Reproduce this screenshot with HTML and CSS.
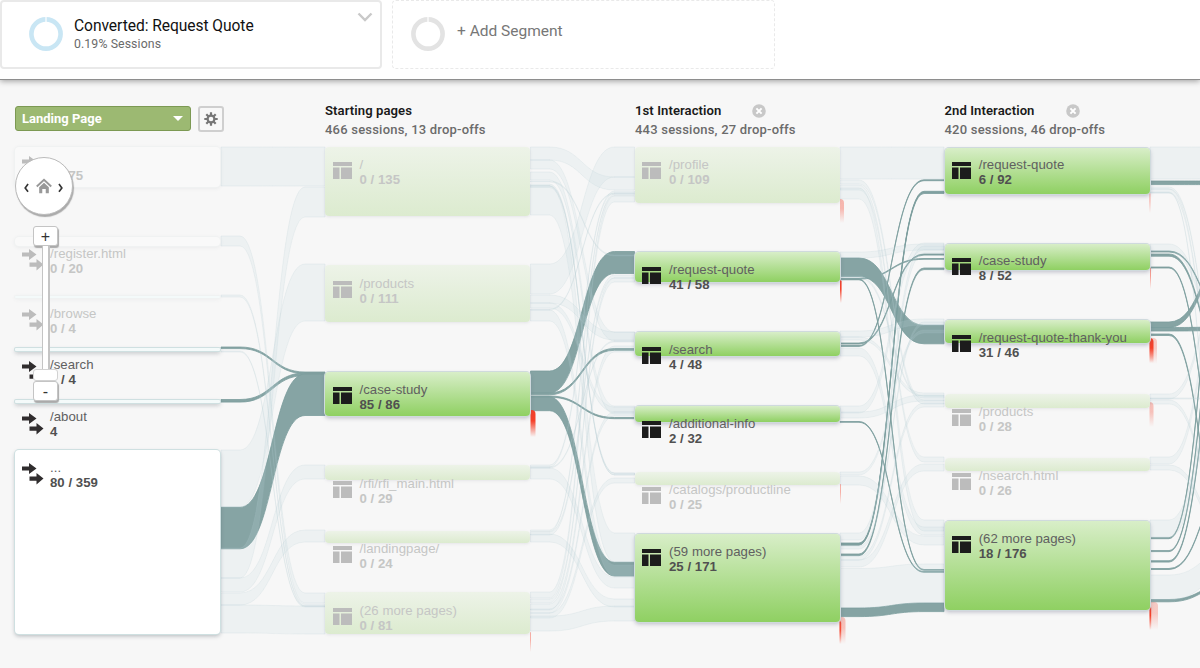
FILE: index.html
```html
<!DOCTYPE html>
<html lang="en">
<head>
<meta charset="utf-8">
<title>Users Flow</title>
<link rel="stylesheet" href="styles.css">
</head>
<body>
<header class="segments">
  <div class="segment">
    <svg class="ring ring-blue" viewBox="0 0 36 36"><circle cx="18" cy="18" r="14.6"/><path d="M18 0v7"/></svg>
    <div class="segment-text">
      <div class="segment-title">Converted: Request Quote</div>
      <div class="segment-sub">0.19% Sessions</div>
    </div>
    <svg class="chevron" viewBox="0 0 16 10"><path d="M1.5 1.5 8 8l6.500-6.500"/></svg>
  </div>
  <div class="segment segment-add">
    <svg class="ring" viewBox="0 0 36 36"><circle cx="18" cy="18" r="14.6"/><path d="M18 0v7"/></svg>
    <div class="add-label">+ Add Segment</div>
  </div>
</header>
<main class="flow">
  <div class="heads">
    <div class="tools">
      <div class="select"><span>Landing Page</span><i class="caret"></i></div>
      <div class="gear"><svg viewBox="0 0 14 14"><g stroke="#777" stroke-width="2.2"><path d="M7 0.300v13.400M0.300 7h13.400M2.300 2.300l9.400 9.400M11.700 2.300l-9.400 9.400"/></g><circle cx="7" cy="7" r="3.400" fill="#f8f8f8" stroke="#777" stroke-width="2.200"/></svg></div>
    </div>
    <div class="head"><div class="head-title">Starting pages</div><div class="head-sub">466 sessions, 13 drop-offs</div></div>
    <div class="head"><div class="head-title"><span class="t1">1st Interaction</span><svg class="close" viewBox="0 0 14 14"><circle cx="7" cy="7" r="6.800"/><path d="M4.400 4.400l5.200 5.200M9.600 4.400l-5.200 5.200"/></svg></div><div class="head-sub">443 sessions, 27 drop-offs</div></div>
    <div class="head"><div class="head-title"><span class="t2">2nd Interaction</span><svg class="close" viewBox="0 0 14 14"><circle cx="7" cy="7" r="6.800"/><path d="M4.400 4.400l5.200 5.200M9.600 4.400l-5.200 5.200"/></svg></div><div class="head-sub">420 sessions, 46 drop-offs</div></div>
  </div>
  <div class="canvas">
    <svg class="links" id="links" viewBox="0 140 1200 528"></svg>
    <div id="nodes"></div>
    <div class="nav">
      <div class="pan"><svg viewBox="0 0 58 58"><path d="M12.500 27l-3 4 3 4M44.500 27l3 4-3 4" fill="none" stroke="#333" stroke-width="1.700"/><path d="M21.500 29.500 29 22.500l7.500 7" fill="none" stroke="#999" stroke-width="2"/><path d="M24 30.300l5-4.600 5 4.600V36.500h-3.200V32h-3.600v4.500H24z" fill="#999"/></svg></div>
      <div class="zoom zoom-in">+</div>
      <div class="track"></div>
      <div class="thumb"></div>
      <div class="zoom zoom-out">-</div>
    </div>
  </div>
</main>
<script src="flow.js"></script>
</body>
</html>
```
FILE: styles.css
```css
* { box-sizing: border-box; }
body { margin: 0; width: 1200px; height: 668px; overflow: hidden; background: #f7f7f7; font-family: Roboto, "Liberation Sans", sans-serif; }
.segments { position: relative; z-index: 2; display: flex; gap: 10px; height: 80px; background: #fff; border-bottom: 1px solid #8e8e8e; box-shadow: 0 1px 6px rgba(0,0,0,.38); }
.segment { display: flex; align-items: flex-start; width: 382px; height: 69px; padding: 14px 8px 0 26px; border: 2px solid #e9e9e9; border-radius: 4px; }
.segment-add { width: 383px; padding-left: 17px; border: 1px dashed #e9e9e9; padding-top: 15px; }
.ring { width: 36px; height: 36px; fill: none; stroke: #e3e3e3; stroke-width: 4.6; }
.ring-blue { stroke: #c9e6f4; }
.ring path { stroke: #fff; stroke-width: 1.2; }
.segment-text { flex: 1; margin-left: 10px; }
.segment-title { font-size: 15.6px; line-height: 20px; letter-spacing: -.06px; color: #111; }
.segment-sub { font-size: 12.3px; line-height: 16px; letter-spacing: .1px; color: #6a6a6a; }
.chevron { width: 16px; height: 10px; margin: -4px -1px 0 0; fill: none; stroke: #c9c9c9; stroke-width: 2.4; }
.add-label { margin: 5px 0 0 11px; font-size: 15.5px; line-height: 20px; color: #777; }
.heads { display: grid; grid-template-columns: 310px 310px 309.5px 1fr; height: 60px; padding-left: 15px; }
.tools { display: flex; gap: 7px; padding-top: 26px; }
.select { display: flex; justify-content: space-between; align-items: center; width: 176px; height: 25px; padding: 0 7px 1px 6px; background: #9cb972; border: 1px solid #7c9953; border-radius: 3px; color: #fff; font-weight: 700; font-size: 13px; }
.caret { border: 5px solid transparent; border-top-color: #fff; border-bottom: 0; }
.gear { display: flex; align-items: center; justify-content: center; width: 26px; height: 26px; margin-top: 0; background: #f8f8f8; border: 2px solid #cfcfcf; border-radius: 3px; }
.gear svg { width: 14px; height: 14px; }
.head { padding-top: 21px; }
.head-title { display: flex; align-items: center; height: 19px; font-size: 13.1px; font-weight: 600; letter-spacing: .08px; color: #1a1a1a; }
.head-sub { height: 19px; font-size: 13px; line-height: 19px; font-weight: 500; letter-spacing: .21px; color: #6b6b6b; }
.t1 { width: 117px; }
.t2 { width: 121px; }
.close { width: 14px; height: 14px; fill: #c8c8c8; }
.close path { stroke: #fff; stroke-width: 2; }
.canvas { position: relative; height: 528px; }
.links { position: absolute; left: 0; top: 0; width: 1200px; height: 528px; }
.strong { fill: #86a4a4; stroke: #7b9d9d; stroke-width: .8; }
.faint { fill: rgba(196,215,224,.18); stroke: rgba(175,200,206,.2); stroke-width: .8; }
.node { position: absolute; width: 205px; border-radius: 4px; }
.page { background: linear-gradient(#d8eec8, #8fd062); box-shadow: 0 0 0 1px #cfdadd, 0 2px 4px rgba(90,90,120,.38); }
.page.dim { background: linear-gradient(#edf3e8, #dcebcf); box-shadow: 0 1px 3px rgba(120,120,150,.14); }
.entry { background: #fff; box-shadow: 0 0 0 1px #cfe0e1, 0 2px 4px rgba(80,90,100,.4); }
.entry.dim { background: #f9f9f9; box-shadow: 0 0 0 1px #f0f2f2, 0 1px 4px rgba(80,90,100,.1); }
.entry.slim { background: #f4fafa; border-radius: 1px; }
.label { position: absolute; font: 13.2px/15px "Liberation Sans", Arial, sans-serif; letter-spacing: .04px; color: #606060; white-space: nowrap; }
.label b { display: block; line-height: 16px; color: #505050; }
.label.dim, .label.dim b { color: #c5c6c5; }
.icon { position: absolute; width: 22px; height: 22px; fill: #1c1c1c; }
.icon.entry-icon { fill: #302d2e; }
.icon.dim { fill: #bcbcbc; }
.nav { position: absolute; left: 15px; top: 17px; width: 60px; height: 250px; }
.pan { position: absolute; left: 0; top: 0; width: 58px; height: 58px; border-radius: 50%; background: #fff; border: 1px solid #bbb; box-shadow: 1px 2px 1px #aaa; }
.pan svg { display: block; width: 56px; height: 56px; }
.zoom { position: absolute; left: 18px; width: 25px; height: 20px; background: #fff; border: 1px solid #c4c4c4; border-radius: 3px; box-shadow: 1px 2px 1px #aaa; color: #333; font: 16px/20px "Liberation Sans", Arial, sans-serif; text-align: center; }
.zoom-in { top: 69px; }
.zoom-out { top: 224px; }
.track { position: absolute; left: 27px; top: 89px; width: 8px; height: 124px; background: #fff; border: solid #c4c4c4; border-width: 0 2px 0 1px; }
.thumb { position: absolute; left: 18px; top: 212px; width: 25px; height: 12px; background: #fff; border: 1px solid #d2d2d2; border-radius: 3px; }
```
FILE: flow.js
```js
const TOP = 140;
const links = document.getElementById('links');
const nodes = document.getElementById('nodes');

// Each link: [source y, target y, thickness], grouped by the gap it spans.
const gaps = [
  { x: 221, faint: [[147,147,39],[236,593,10],[295,604,2],[351,606,1],[450,264,57],[548,187,30],[578,465,14],[593,530,12],[605,606,28]],
    strong: [[347,372,1.6],[399.500,373,2.600],[507.300,374,41.500]] },
  { x: 530.5, faint: [[147,177,13],[160,332,9],[172,406,8],[181,255,1],[184,473,2],[185.500,473,2],[186,533,29],[264,147,30],[295,332,8],[303,407,5],[309,193,1],[310,565,11],[465,191,2],[467,341,1],[468,577,11],[530,194,1.500],[532,275,3],[534,599,8],[592,196,6],[599,278,4],[604,346,6],[609,412,4],[613,478,5],[616,606,15]],
    strong: [[371,251.500,22],[393,348.500,1.800],[396,417.500,1.200],[397,562.300,13.700]] },
  { x: 840, faint: [[147,147,32],[180,400,4],[185,457,5],[188,520,11],[252,244,6],[276,396,2],[331,319,6],[337,393,3],[348,527,8],[406,243,7],[412,395,6],[472,330,3],[476,536,9],[533,246,7],[546,322,3],[556,403,4],[560,464,7],[568.500,564,39]],
    strong: [[278.300,258.500,.8],[258,325.300,18.500],[279,569.500,.8],[343,254,1.100],[345.500,179.800,.9],[421.500,571.500,.8],[543,191.300,1.200],[544,192.300,1.200],[554,268,1.600],[608,603,8.600]] },
  { x: 1150, faint: [[147,147,32],[187,410,2],[189,450,4],[192,560,1],[244,350,7],[394,260,5],[398,398,1],[400,530,4],[457,250,7],[465,540,5],[520,330,17],[575,549,25]],
    strong: [[181,181,3.600],[251,325,1],[254,375,2.200],[267,520,1],[322,250,5.500],[327.500,327,3.500],[334,570,1.500],[537.700,180,1],[550.600,245,1],[560.700,300,1.400],[568.500,477,1],[599.500,582,2.300]] }
];

function ribbon(x, a, b, h) {
  const s = x + 19, m = x + 51.5, e = x + 84, end = x + 104;
  return `M${x} ${a}H${s}C${m} ${a} ${m} ${b} ${e} ${b}H${end}V${b + h}H${e}C${m} ${b + h} ${m} ${a + h} ${s} ${a + h}H${x}Z`;
}

// Drop-offs: [x, y, width, height, opacity]
const drops = [[530.500,410,5,27,1],[530,632,1,20,.4],[840,199,4,24,.35],[840,280,1.600,23,1],[840,484,.8,20,.5],[839.500,617,6,27,.3],[839.500,621,1.700,23,.9],[1149.500,193,.9,20,.5],[1150,267,1,22,.5],[1149.500,338,7.500,26,.25],[1149.500,338,4,25,1],[1149.500,402,4,25,.3],[1149.500,602,8.500,28,.25],[1149.500,606,1.700,24,1]];

let svg = '<defs><linearGradient id="drop" x1="0" x2="0" y1="0" y2="1"><stop offset="0" stop-color="#f5412a"/><stop offset=".4" stop-color="#f5412a"/><stop offset="1" stop-color="#f5412a" stop-opacity="0"/></linearGradient></defs>';
for (const g of gaps) {
  for (const kind of ['strong', 'faint']) {
    for (const [a, b, h] of g[kind]) svg += `<path class="${kind}" d="${ribbon(g.x, a, b, h)}"/>`;
  }
}
for (const [x, y, w, h, o] of drops) {
  const r = Math.min(w, 4);
  svg += `<path d="M${x} ${y}h${w - r}q${r} 0 ${r} ${r}v${h - r}h${-w}z" fill="url(#drop)" opacity="${o}"/>`;
}
links.innerHTML = svg;

// Nodes: [top, bottom, label baseline, name, value, active]
const columns = [
  { x: 15.3, type: 'entry', rows: [[147,187,165,'','0 / 75',0],[236.500,246,258,'/register.html','0 / 20',0],[295.500,298,318,'/browse','0 / 4',0],[347.500,350.500,369.500,'/search','1 / 4',1],[399.500,402.500,421.500,'/about','4',1],[450,634,472.400,'...','80 / 359',1]] },
  { x: 325.3, type: 'page', rows: [[147,216,169.400,'/','0 / 135',0],[264.500,322,288,'/products','0 / 111',0],[371.500,416,394,'/case-study','85 / 86',1],[465,480,488,'/rfi/rfi_main.html','0 / 29',0],[530.500,543,553,'/landingpage/','0 / 24',0],[592,634,615,'(26 more pages)','0 / 81',0]] },
  { x: 634.8, type: 'page', rows: [[147,203,169.400,'/profile','0 / 109',0],[252,282,274.400,'/request-quote','41 / 58',1],[332,356,354,'/search','4 / 48',1],[406,422,428,'/additional-info','2 / 32',1],[472,485,494.400,'/catalogs/productline','0 / 25',0],[534,621.500,556.400,'(59 more pages)','25 / 171',1]] },
  { x: 944.5, type: 'page', rows: [[147.500,193.500,169.400,'/request-quote','6 / 92',1],[243.500,270,265.400,'/case-study','8 / 52',1],[319.500,343,342,'/request-quote-thank-you','31 / 46',1],[393.500,408,416,'/products','0 / 28',0],[458,471,480,'/nsearch.html','0 / 26',0],[521,610,543,'(62 more pages)','18 / 176',1]] }
];
const pageIcon = '<path d="M0 0h19v4H0zM0 5.500h6.500V17H0zM8 5.500h11V17H8z"/>';
const entryIcon = '<path d="M0 3.500h7V0l7.500 5.500L7 11V7.500H0zM7.500 13.500h7V10l7 5.500-7 6v-3.800h-7z"/>';

let html = '';
for (const c of columns) {
  for (const [top, bottom, base, name, value, on] of c.rows) {
    const dim = on ? '' : ' dim';
    const slim = bottom - top < 5 ? ' slim' : '';
    const entry = c.type === 'entry';
    html += `<div class="node ${c.type}${slim}${dim}" style="left:${c.x}px;top:${top - TOP}px;height:${bottom - top}px"></div>`;
    html += `<svg class="icon ${entry ? 'entry-icon' : ''}${dim}" viewBox="0 0 22 22" style="left:${c.x + (entry ? 6.7 : 7.4)}px;top:${base - TOP - (entry ? 9 : 7.2)}px">${entry ? entryIcon : pageIcon}</svg>`;
    html += `<div class="label${dim}" style="left:${c.x + (entry ? 34.7 : 34.2)}px;top:${base - TOP - 12.4}px">${name || '&nbsp;'}<b>${value}</b></div>`;
  }
}
nodes.innerHTML = html;
```
